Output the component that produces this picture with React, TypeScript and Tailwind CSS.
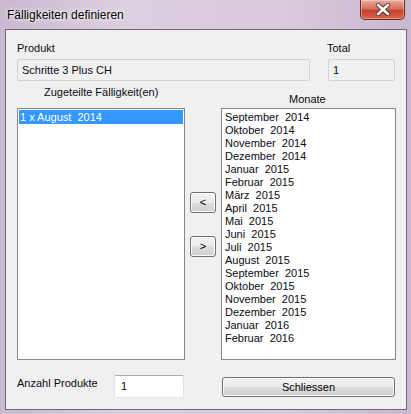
import { memo } from 'react';

const MONTHS = [
  'September  2014',
  'Oktober  2014',
  'November  2014',
  'Dezember  2014',
  'Januar  2015',
  'Februar  2015',
  'März  2015',
  'April  2015',
  'Mai  2015',
  'Juni  2015',
  'Juli  2015',
  'August  2015',
  'September  2015',
  'Oktober  2015',
  'November  2015',
  'Dezember  2015',
  'Januar  2016',
  'Februar  2016',
];

const BTN =
  'flex items-center justify-center border border-[#707070] rounded-[3px] text-[11px] text-black ' +
  'bg-[linear-gradient(#f2f2f2,#ebebeb_50%,#dddddd_50%,#cfcfcf)] shadow-[inset_0_0_0_1px_#fbfbfb]';

const CloseButton = () => (
  <div className="
    w-[45px] h-[20px] mr-[6px] flex items-center justify-center rounded-b-[5px] border border-t-0 border-[#6b2c22]
    bg-[linear-gradient(#e9a99b,#d8735f_45%,#c4432b_55%,#d8644a)] shadow-[inset_0_0_0_1px_rgba(255,255,255,0.35)]
  ">
    <svg width="16" height="13" viewBox="0 0 16 13">
      <path d="M3 2 L13 11 M13 2 L3 11" stroke="#4a3a3a" strokeWidth="4.4" strokeLinecap="round" />
      <path d="M3 2 L13 11 M13 2 L3 11" stroke="#ffffff" strokeWidth="2.6" strokeLinecap="round" />
    </svg>
  </div>
);

const AppComponent = () => {
  return (
    <div className="
      w-[411px] h-[414px] overflow-hidden flex flex-col
      bg-[linear-gradient(90deg,#c9b8cf,#dccfe0_30%,#d8c9dc_70%,#c9b7ce)]
      font-['Liberation_Sans',Arial,sans-serif]
    ">
      <div className="h-[29px] flex items-start justify-between">
        <div className="pl-[7px] pt-[8px] text-[12px] leading-[15px] text-black [text-shadow:0_0_6px_#ffffff,0_0_3px_#ffffff]">
          Fälligkeiten definieren
        </div>
        <CloseButton />
      </div>

      <div className="ml-[5px] w-[402px] h-[381px] border border-[#6e6674] bg-[#f0f0f0] text-[11px] leading-[13px] text-[#0a0a14]">
        <div className="pl-[11px] flex flex-col">
          <div className="mt-[12px] h-[13px] flex">
            <span className="w-[310px]">Produkt</span>
            <span>Total</span>
          </div>
          <div className="mt-[4px] flex">
            <div className="w-[293px] h-[22px] border border-[#d2d2d2] rounded-[2px] bg-[#f0f0f0] pl-[4px] flex items-center">
              Schritte 3 Plus CH
            </div>
            <div className="ml-[18px] w-[67px] h-[22px] border border-[#d2d2d2] rounded-[2px] bg-[#f0f0f0] pl-[4px] flex items-center">
              1
            </div>
          </div>

          <div className="flex">
            <div className="w-[168px] flex flex-col">
              <div className="mt-[5px] h-[13px] pl-[27px]">Zugeteilte Fälligkeit(en)</div>
              <div className="mt-[9px] h-[252px] border border-[#828790] bg-white p-px">
                <div className="h-[14px] pl-[1px] bg-[#3399ff] text-white leading-[14px] whitespace-pre">1 x August  2014</div>
              </div>
            </div>

            <div className="ml-[5px] w-[26px] flex flex-col">
              <div className={BTN + ' mt-[111px] h-[21px]'}>&lt;</div>
              <div className={BTN + ' mt-[23px] h-[21px]'}>&gt;</div>
            </div>

            <div className="ml-[5px] w-[175px] flex flex-col">
              <div className="mt-[12px] h-[13px] pl-[68px]">Monate</div>
              <div className="mt-[2px] h-[252px] border border-[#828790] bg-white pt-[2px] pl-[3px]">
                {MONTHS.map((m, i) => (
                  <div key={i} className="h-[13px] whitespace-pre">{m}</div>
                ))}
              </div>
            </div>
          </div>

          <div className="flex items-start">
            <span className="mt-[17px] w-[97px]">Anzahl Produkte</span>
            <div className="
              mt-[15px] w-[70px] h-[23px] bg-white border border-[#e2e3ea] border-t-[#abadb3] rounded-[2px]
              pl-[6px] flex items-center
            ">1</div>
            <div className={BTN + ' ml-[38px] mt-[17px] w-[173px] h-[20px]'}>Schliessen</div>
          </div>
        </div>
      </div>
    </div>
  );
};

export default memo(AppComponent);
